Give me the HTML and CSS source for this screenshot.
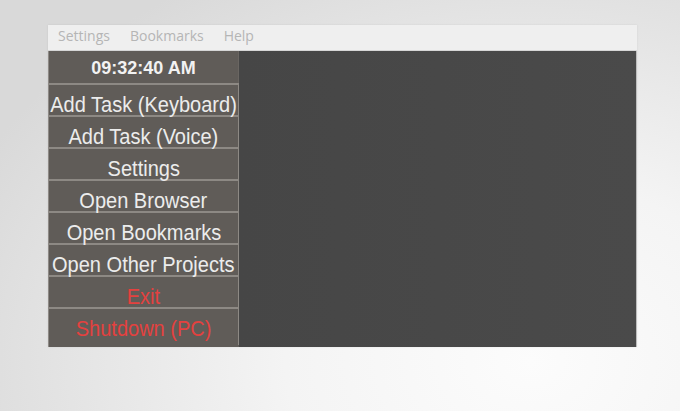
FILE: index.html
```html
<!DOCTYPE html>
<html>
<head>
<meta charset="utf-8">
<link rel="stylesheet" href="styles.css">
</head>
<body>
<div class="window">
  <div class="menubar">
    <span class="menu-item">Settings</span>
    <span class="menu-item">Bookmarks</span>
    <span class="menu-item">Help</span>
  </div>
  <div class="content">
    <div class="sidebar">
      <div class="clock">09:32:40 AM</div>
      <div class="btn"><span class="label">Add Task (Keyboard)</span></div>
      <div class="btn"><span class="label">Add Task (Voice)</span></div>
      <div class="btn"><span class="label">Settings</span></div>
      <div class="btn"><span class="label">Open Browser</span></div>
      <div class="btn"><span class="label">Open Bookmarks</span></div>
      <div class="btn"><span class="label">Open Other Projects</span></div>
      <div class="btn danger"><span class="label">Exit</span></div>
      <div class="btn danger last"><span class="label">Shutdown (PC)</span></div>
    </div>
    <div class="main"></div>
  </div>
</div>
</body>
</html>
```
FILE: styles.css
```css
html, body {
  margin: 0;
  height: 100%;
}
body {
  padding: 25px 0 0 48px;
  box-sizing: border-box;
  background: radial-gradient(ellipse 90% 110% at 78% 88%, #fcfcfc 0%, #f4f4f4 40%, #e2e2e2 80%, #d9d9d9 100%);
  font-family: "Liberation Sans", Arial, sans-serif;
  overflow: hidden;
}
.window {
  width: 589px;
  height: 322px;
  display: flex;
  flex-direction: column;
  box-shadow: 0 0 2px rgba(0,0,0,0.08);
}
.menubar {
  height: 26px;
  box-sizing: border-box;
  background: #efefef;
  display: flex;
  gap: 20px;
  padding: 0 0 5px 10px;
  line-height: 21px;
  font-family: "Open Sans", sans-serif;
  font-size: 14px;
  color: #b5b5b5;
  border-bottom: 1px solid #d6d6d6;
}
.content {
  flex: 1;
  display: flex;
  min-height: 0;
}
.sidebar {
  width: 191px;
  background: #605c58;
  display: flex;
  flex-direction: column;
  border-left: 1px solid #8e8a86;
  box-sizing: border-box;
  overflow: hidden;
}
.clock {
  height: 32px;
  box-sizing: border-box;
  text-align: center;
  font-weight: bold;
  font-size: 18px;
  line-height: 20px;
  padding-top: 7px;
  color: #f2f2f2;
  border-right: 1px solid #6a6662;
}
.btn {
  height: 32px;
  box-sizing: border-box;
  border-top: 2px solid #8d8984;
  border-right: 1px solid #8d8984;
  text-align: center;
  font-size: 22px;
  line-height: 22px;
  padding-top: 9px;
  color: #ececec;
  white-space: nowrap;
  display: flex;
  justify-content: center;
}
.btn.last {
  height: 38px;
}
.label {
  display: inline-block;
  transform: scaleX(0.91);
}
.danger {
  color: #e4413f;
}
.main {
  flex: 1;
  background: linear-gradient(90deg, #464646 0%, #4a4a4a 100%);
  border-right: 1px solid #bdbdbd;
}
```
